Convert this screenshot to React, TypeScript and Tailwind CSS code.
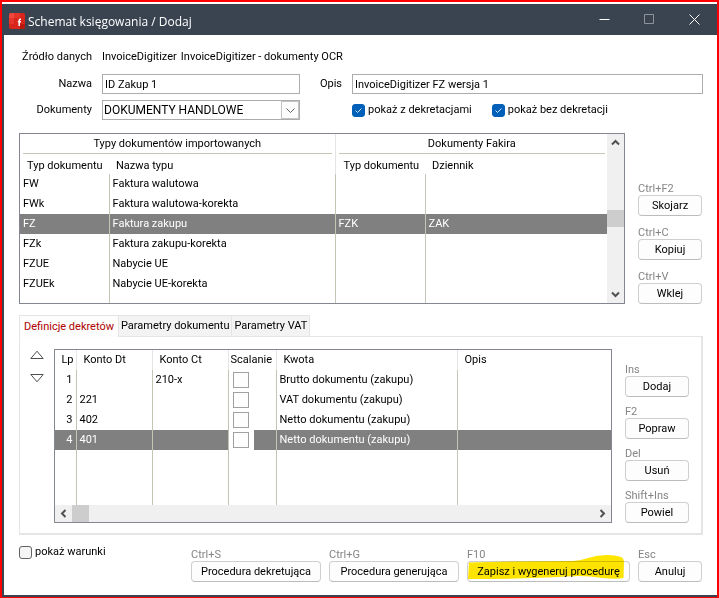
import { useState } from 'react';

interface DocType {
  code: string;
  name: string;
  fakirType?: string;
  journal?: string;
}

interface Entry {
  lp: number;
  dt?: string;
  ct?: string;
  amount: string;
  desc?: string;
}

const docTypes: DocType[] = [
  { code: 'FW', name: 'Faktura walutowa' },
  { code: 'FWk', name: 'Faktura walutowa-korekta' },
  { code: 'FZ', name: 'Faktura zakupu', fakirType: 'FZK', journal: 'ZAK' },
  { code: 'FZk', name: 'Faktura zakupu-korekta' },
  { code: 'FZUE', name: 'Nabycie UE' },
  { code: 'FZUEk', name: 'Nabycie UE-korekta' },
];

const entries: Entry[] = [
  { lp: 1, ct: '210-x', amount: 'Brutto dokumentu (zakupu)' },
  { lp: 2, dt: '221', amount: 'VAT dokumentu (zakupu)' },
  { lp: 3, dt: '402', amount: 'Netto dokumentu (zakupu)' },
  { lp: 4, dt: '401', amount: 'Netto dokumentu (zakupu)' },
];

const tabs = ['Definicje dekretów', 'Parametry dokumentu', 'Parametry VAT'];

function ShortcutButton({ hint, label, className = '' }: { hint: string; label: string; className?: string }) {
  return (
    <div className={`flex flex-col ${className}`}>
      <span className="h-3.5 leading-4 text-[#858585]">{hint}</span>
      <button
        type="button"
        className="h-[21px] w-full rounded border border-[#cfcfcf] border-b-[#bcbcbc] bg-[#fdfdfd] text-center leading-[18px] whitespace-nowrap"
      >
        {label}
      </button>
    </div>
  );
}

function Chevron({ d }: { d: string }) {
  return (
    <svg width="9" height="9" viewBox="0 0 9 9" fill="none" stroke="#505050" strokeWidth="2">
      <path d={d} />
    </svg>
  );
}

function CheckOption({ label, checked, onChange }: { label: string; checked: boolean; onChange: () => void }) {
  return (
    <label className="flex items-center gap-[3px] leading-[18px] whitespace-nowrap">
      <span className="relative flex">
        <input
          type="checkbox"
          checked={checked}
          onChange={onChange}
          className="h-[13px] w-[13px] appearance-none rounded-[3px] border border-[#626262] bg-[#f5f5f5] checked:border-[#005fb8] checked:bg-[#005fb8]"
        />
        {checked && (
          <svg className="pointer-events-none absolute inset-0" width="13" height="13" viewBox="0 0 13 13" fill="none" stroke="#d5e6f6">
            <path d="M3.5 6.5 5.5 8.5 9.5 4.5" />
          </svg>
        )}
      </span>
      {label}
    </label>
  );
}

function TitleBar() {
  return (
    <header className="flex h-[31px] items-center bg-[#3a4451] pl-[5px] text-white">
      <svg className="mt-[3px]" width="16" height="16" viewBox="0 0 16 16">
        <rect width="16" height="16" rx="2" fill="#d9261c" />
        <path d="M0 2a2 2 0 0 1 2-2h3v5H0z" fill="#f0483e" />
        <path d="M5 0h6v5H5zM0 5h5v6H0z" fill="#e5352b" />
        <path d="M11 11h5v3a2 2 0 0 1-2 2h-3z" fill="#b9180f" />
        <path d="M12 6.2H11.2Q10.2 6.2 10.2 7.3V13M8.8 8.7H12" fill="none" stroke="#fff" strokeWidth="1.5" />
      </svg>
      <h1 className="mt-1 ml-[3px] flex-1 font-['Open_Sans',sans-serif] text-xs whitespace-nowrap">Schemat księgowania / Dodaj</h1>
      <button type="button" aria-label="Minimalizuj" className="flex w-[45px] justify-center">
        <svg width="11" height="11" viewBox="0 0 11 11" stroke="#fff"><path d="M.5 5.5h10" /></svg>
      </button>
      <button type="button" aria-label="Maksymalizuj" className="flex w-[45px] justify-center">
        <svg width="11" height="11" viewBox="0 0 11 11" fill="none" stroke="#8f949b"><path d="M.5.5h9v9h-9z" /></svg>
      </button>
      <button type="button" aria-label="Zamknij" className="flex w-[45px] justify-center">
        <svg width="11" height="11" viewBox="0 0 11 11" stroke="#fff"><path d="M.5.5l10 10M10.5.5l-10 10" /></svg>
      </button>
    </header>
  );
}

function SourceForm() {
  const [withEntries, setWithEntries] = useState(true);
  const [withoutEntries, setWithoutEntries] = useState(true);

  return (
    <section className="grid grid-cols-[73px_198px_32px_1fr] items-center gap-x-2.5 pr-[14px]">
      <span className="text-right leading-[18px] whitespace-nowrap">Źródło danych</span>
      <p className="col-span-3 flex h-5 items-center gap-1 leading-[18px]">
        <span>InvoiceDigitizer</span>
        <span>InvoiceDigitizer - dokumenty OCR</span>
      </p>

      <label htmlFor="name" className="mt-[7px] text-right">Nazwa</label>
      <input id="name" defaultValue="ID Zakup 1" className="mt-[7px] h-5 w-full border border-[#acacac] px-0.5" />
      <label htmlFor="desc" className="mt-[7px] text-right">Opis</label>
      <input id="desc" defaultValue="InvoiceDigitizer FZ wersja 1" className="mt-[7px] h-5 w-full border border-[#acacac] px-0.5" />

      <label htmlFor="docs" className="mt-1.5 text-right">Dokumenty</label>
      <div className="relative mt-1.5">
        <select id="docs" className="block h-5 w-full appearance-none border border-[#acacac] bg-white pl-px text-xs leading-4">
          <option>DOKUMENTY HANDLOWE</option>
        </select>
        <span className="pointer-events-none absolute top-px right-px flex h-[18px] w-[18px] items-center justify-center border border-[#c4c4c4] bg-[#fdfdfd]">
          <svg width="9" height="5" viewBox="0 0 9 5" fill="none" stroke="#606060"><path d="M.5.5l4 4 4-4" /></svg>
        </span>
      </div>
      <div className="col-span-2 mt-1.5 ml-[42px] flex gap-5">
        <CheckOption label="pokaż z dekretacjami" checked={withEntries} onChange={() => setWithEntries(!withEntries)} />
        <CheckOption label="pokaż bez dekretacji" checked={withoutEntries} onChange={() => setWithoutEntries(!withoutEntries)} />
      </div>
    </section>
  );
}

function DocTypesTable() {
  const [selected, setSelected] = useState('FZ');

  return (
    <div className="flex h-[171px] flex-1 border border-[#828790]">
      <div className="flex flex-1 flex-col">
        <table className="h-full w-full table-fixed border-collapse">
          <colgroup>
            <col className="w-[89px]" />
            <col className="w-[226px]" />
            <col className="w-[90px]" />
            <col />
          </colgroup>
          <thead>
            <tr className="h-5">
              <th colSpan={2} className="border-r border-[#e5e5e5] px-[3px] pb-0 font-normal">
                <div className="h-[19px] border-b border-[#c5c5b5] leading-[18px]">Typy dokumentów importowanych</div>
              </th>
              <th colSpan={2} className="pr-0.5 pl-[3px] font-normal">
                <div className="h-[19px] border-b border-[#c5c5b5] leading-[18px]">Dokumenty Fakira</div>
              </th>
            </tr>
            <tr className="h-5 text-left whitespace-nowrap">
              <th className="pt-1 pl-[7px] font-normal">Typ dokumentu</th>
              <th className="border-r border-[#e5e5e5] pt-1 pl-[7px] font-normal">Nazwa typu</th>
              <th className="pt-1 pl-2 font-normal">Typ dokumentu</th>
              <th className="pt-1 pl-[7px] font-normal">Dziennik</th>
            </tr>
          </thead>
          <tbody className="leading-[18px]">
            {docTypes.map((doc) => (
              <tr
                key={doc.code}
                onClick={() => setSelected(doc.code)}
                className={`h-5 ${doc.code === selected ? 'bg-[#808080] text-white' : ''}`}
              >
                <td className="border-r border-[#c5c5b5] pl-[3px]">{doc.code}</td>
                <td className="border-r border-[#c5c5b5] pl-[3px]">{doc.name}</td>
                <td className="border-r border-[#c5c5b5] pl-[3px]">{doc.fakirType}</td>
                <td className="pl-[3px]">{doc.journal}</td>
              </tr>
            ))}
            <tr>
              <td className="border-r border-[#c5c5b5]" />
              <td className="border-r border-[#c5c5b5]" />
              <td className="border-r border-[#c5c5b5]" />
              <td />
            </tr>
          </tbody>
        </table>
      </div>
      <div className="flex w-[17px] flex-col items-center bg-[#f0f0f0]">
        <span className="flex h-[17px] items-center"><Chevron d="M1 6.5l3.5-3.5 3.5 3.5" /></span>
        <span className="mt-[59px] h-[17px] w-full bg-[#cdcdcd]" />
        <span className="mt-auto flex h-[17px] items-center"><Chevron d="M1 2.5l3.5 3.5 3.5-3.5" /></span>
      </div>
    </div>
  );
}

function EntriesTable() {
  const [selected, setSelected] = useState(4);

  return (
    <div className="flex h-[174px] flex-1 flex-col border border-[#828790]">
      <table className="w-full flex-1 table-fixed border-collapse">
        <colgroup>
          <col className="w-[21px]" />
          <col className="w-[76px]" />
          <col className="w-[76px]" />
          <col className="w-12" />
          <col className="w-[181px]" />
          <col />
        </colgroup>
        <thead>
          <tr className="h-5 text-left whitespace-nowrap">
            <th className="border-r border-[#e5e5e5] pr-0.5 text-right font-normal">Lp</th>
            <th className="border-r border-[#e5e5e5] pl-[7px] font-normal">Konto Dt</th>
            <th className="border-r border-[#e5e5e5] pl-[7px] font-normal">Konto Ct</th>
            <th className="border-r border-[#e5e5e5] pl-0.5 font-normal">Scalanie</th>
            <th className="border-r border-[#e5e5e5] pl-[7px] font-normal">Kwota</th>
            <th className="pl-[7px] font-normal">Opis</th>
          </tr>
        </thead>
        <tbody className="leading-[18px]">
          {entries.map((entry) => (
            <tr
              key={entry.lp}
              onClick={() => setSelected(entry.lp)}
              className={`h-5 ${entry.lp === selected ? 'bg-[#808080] text-white' : ''}`}
            >
              <td className="border-r border-[#c5c5b5] pr-[3px] text-right">{entry.lp}</td>
              <td className="border-r border-[#c5c5b5] pl-[3px]">{entry.dt}</td>
              <td className="border-r border-[#c5c5b5] pl-[3px]">{entry.ct}</td>
              <td className="border-r border-[#c5c5b5]">
                <span className="flex h-5 w-[25px] items-center bg-white pl-1">
                  <input
                    type="checkbox"
                    aria-label={`Scalanie ${entry.lp}`}
                    className="h-4 w-4 appearance-none border border-[#a0a0a0] bg-[#fdfdfd] checked:bg-[#005fb8]"
                  />
                </span>
              </td>
              <td className="border-r border-[#c5c5b5] pl-[3px]">{entry.amount}</td>
              <td className="pl-[3px]">{entry.desc}</td>
            </tr>
          ))}
          <tr>
            <td className="border-r border-[#c5c5b5]" />
            <td className="border-r border-[#c5c5b5]" />
            <td className="border-r border-[#c5c5b5]" />
            <td className="border-r border-[#c5c5b5]" />
            <td className="border-r border-[#c5c5b5]" />
            <td />
          </tr>
        </tbody>
      </table>
      <div className="flex h-[17px] items-center bg-[#f0f0f0]">
        <span className="flex w-[17px] justify-center"><Chevron d="M6.5 1l-3.5 3.5 3.5 3.5" /></span>
        <span className="h-full w-[17px] bg-[#cdcdcd]" />
        <span className="ml-auto flex w-[17px] justify-center"><Chevron d="M2.5 1l3.5 3.5-3.5 3.5" /></span>
      </div>
    </div>
  );
}

function DefinitionTabs() {
  const [active, setActive] = useState(tabs[0]);

  return (
    <section className="mt-[11px] mr-[14px] ml-[15px]">
      <div role="tablist" className="flex">
        {tabs.map((tab) => (
          <button
            key={tab}
            type="button"
            role="tab"
            aria-selected={tab === active}
            onClick={() => setActive(tab)}
            className={`relative h-[21px] border-t border-r border-[#e5e5e5] leading-[18px] whitespace-nowrap ${
              tab === active ? 'z-10 -mb-px h-[22px] border-l bg-[#fdfdfd] px-1 text-[#b00000]' : 'bg-[#f3f3f3] px-0.5'
            }`}
          >
            {tab}
          </button>
        ))}
      </div>
      <div className="flex h-[199px] border border-[#e5e5e5] border-r-2 border-b-2 pt-3 pr-3 pl-2.5">
        <div className="mt-px mr-2.5 flex w-[14px] flex-col gap-4">
          <button type="button" aria-label="W górę" className="h-2">
            <svg width="14" height="9" viewBox="0 0 14 9" fill="none" stroke="#505050"><path d="M.8 8.5h12.4L7 1.2z" /></svg>
          </button>
          <button type="button" aria-label="W dół" className="h-2">
            <svg width="14" height="9" viewBox="0 0 14 9" fill="none" stroke="#505050"><path d="M.8.5h12.4L7 7.8z" /></svg>
          </button>
        </div>
        <EntriesTable />
        <div className="mt-[13px] ml-[13px] flex w-16 flex-col gap-[7px]">
          <ShortcutButton hint="Ins" label="Dodaj" />
          <ShortcutButton hint="F2" label="Popraw" />
          <ShortcutButton hint="Del" label="Usuń" />
          <ShortcutButton hint="Shift+Ins" label="Powiel" />
        </div>
      </div>
    </section>
  );
}

function Footer() {
  const [conditions, setConditions] = useState(false);

  return (
    <footer className="mt-2 mr-[15px] ml-[15px] flex items-start justify-between">
      <CheckOption label="pokaż warunki" checked={conditions} onChange={() => setConditions(!conditions)} />
      <div className="mt-1 flex gap-2">
        <ShortcutButton hint="Ctrl+S" label="Procedura dekretująca" className="w-[130px]" />
        <ShortcutButton hint="Ctrl+G" label="Procedura generująca" className="w-[130px]" />
        <div className="relative">
          <ShortcutButton hint="F10" label="Zapisz i wygeneruj procedurę" className="w-[163px]" />
          {/* highlighter stroke over the button */}
          <svg className="pointer-events-none absolute top-1.5 left-0 mix-blend-multiply" width="163" height="28" viewBox="0 0 163 28">
            <path d="M2 9.5Q50 8 106 8Q114 7.500 121 5Q130 2 140 2Q150 2 155 4.500Q157 6 157 9L156.500 25Q150 26.500 135 25Q118 22 100 23.500Q60 26 1 26Z" fill="#ffe600" />
          </svg>
        </div>
        <ShortcutButton hint="Esc" label="Anuluj" className="w-16" />
      </div>
    </footer>
  );
}

export default function App() {
  return (
    <div className="min-h-screen border-2 border-[#ff0000] bg-white pt-0.5 font-['Roboto',sans-serif] text-[11px] leading-4 text-black">
      <main className="border-b-2 border-l-2 border-[#3a4451] pb-[13px]">
        <TitleBar />
        <div className="pt-3">
          <div className="pl-[15px]">
            <SourceForm />
          </div>
          <div className="mt-[13px] mr-[15px] ml-[15px] flex">
            <DocTypesTable />
            <div className="mt-12 ml-[13px] flex w-16 flex-col gap-[9px]">
              <ShortcutButton hint="Ctrl+F2" label="Skojarz" />
              <ShortcutButton hint="Ctrl+C" label="Kopiuj" />
              <ShortcutButton hint="Ctrl+V" label="Wklej" />
            </div>
          </div>
          <DefinitionTabs />
          <Footer />
        </div>
      </main>
    </div>
  );
}
